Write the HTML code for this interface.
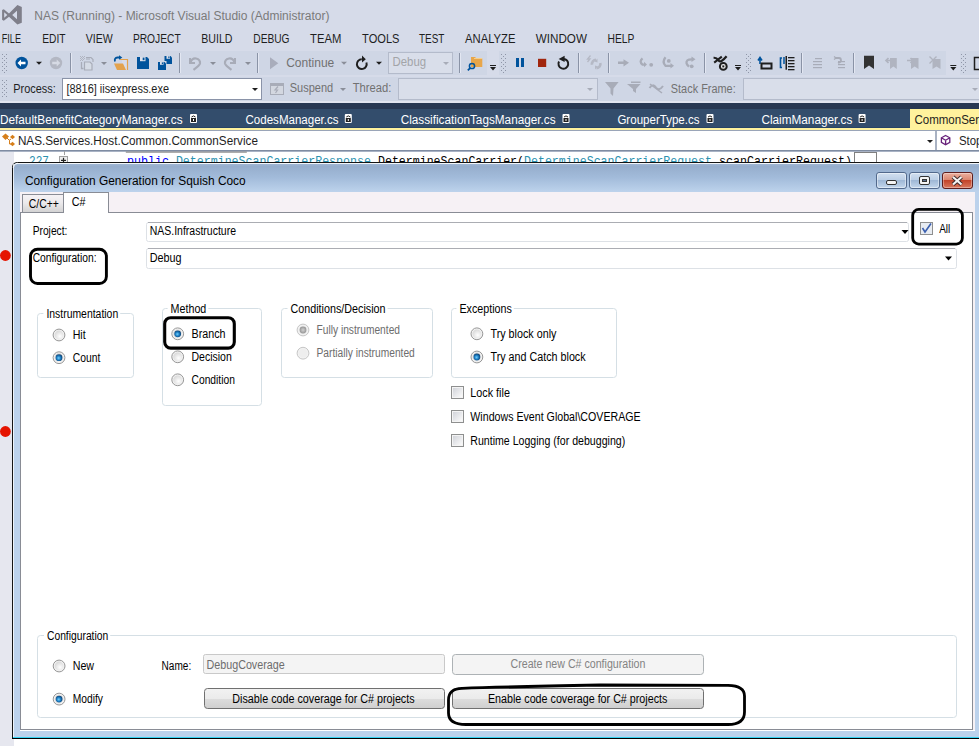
<!DOCTYPE html>
<html><head><meta charset="utf-8"><style>html,body{margin:0;padding:0;background:#fff;overflow:hidden}svg{display:block}</style></head>
<body><svg width="979" height="746" viewBox="0 0 979 746">
<rect x="0" y="0" width="979" height="51" fill="#D6DBE9" />
<path d="M2.1 10 L3.8 9.2 L9 13.4 L17.4 5 L21.8 7 L21.8 22.8 L17.4 24.5 L9 16.8 L3.8 20.8 L2.1 19.8 Z M4.2 12.3 L4.2 17.8 L7.3 15 Z M17 10.8 L12.2 15 L17 19.3 Z" fill="#7F7F8A" fill-rule="evenodd"/>
<text x="34.3" y="19.9" font-family="Liberation Sans" font-size="12.5" fill="#7A7A7A" font-weight="normal" textLength="295.1" lengthAdjust="spacingAndGlyphs" >NAS (Running) - Microsoft Visual Studio (Administrator)</text>
<text x="1.8" y="42.9" font-family="Liberation Sans" font-size="12.5" fill="#1E1E1E" font-weight="normal" textLength="19.2" lengthAdjust="spacingAndGlyphs" >FILE</text>
<text x="42.3" y="42.9" font-family="Liberation Sans" font-size="12.5" fill="#1E1E1E" font-weight="normal" textLength="23.3" lengthAdjust="spacingAndGlyphs" >EDIT</text>
<text x="85.8" y="42.9" font-family="Liberation Sans" font-size="12.5" fill="#1E1E1E" font-weight="normal" textLength="27.0" lengthAdjust="spacingAndGlyphs" >VIEW</text>
<text x="132.9" y="42.9" font-family="Liberation Sans" font-size="12.5" fill="#1E1E1E" font-weight="normal" textLength="47.8" lengthAdjust="spacingAndGlyphs" >PROJECT</text>
<text x="201.2" y="42.9" font-family="Liberation Sans" font-size="12.5" fill="#1E1E1E" font-weight="normal" textLength="31.3" lengthAdjust="spacingAndGlyphs" >BUILD</text>
<text x="253.3" y="42.9" font-family="Liberation Sans" font-size="12.5" fill="#1E1E1E" font-weight="normal" textLength="36.2" lengthAdjust="spacingAndGlyphs" >DEBUG</text>
<text x="310" y="42.9" font-family="Liberation Sans" font-size="12.5" fill="#1E1E1E" font-weight="normal" textLength="31.3" lengthAdjust="spacingAndGlyphs" >TEAM</text>
<text x="362.1" y="42.9" font-family="Liberation Sans" font-size="12.5" fill="#1E1E1E" font-weight="normal" textLength="37.4" lengthAdjust="spacingAndGlyphs" >TOOLS</text>
<text x="419" y="42.9" font-family="Liberation Sans" font-size="12.5" fill="#1E1E1E" font-weight="normal" textLength="25.4" lengthAdjust="spacingAndGlyphs" >TEST</text>
<text x="465" y="42.9" font-family="Liberation Sans" font-size="12.5" fill="#1E1E1E" font-weight="normal" textLength="50.5" lengthAdjust="spacingAndGlyphs" >ANALYZE</text>
<text x="535.8" y="42.9" font-family="Liberation Sans" font-size="12.5" fill="#1E1E1E" font-weight="normal" textLength="51.1" lengthAdjust="spacingAndGlyphs" >WINDOW</text>
<text x="607.5" y="42.9" font-family="Liberation Sans" font-size="12.5" fill="#1E1E1E" font-weight="normal" textLength="26.9" lengthAdjust="spacingAndGlyphs" >HELP</text>
<rect x="0" y="51" width="979" height="52" fill="#D6DBE9" />
<rect x="0" y="51" width="487" height="24" fill="#CFD6E5" />
<rect x="499" y="51" width="447" height="24" fill="#CFD6E5" />
<rect x="960" y="51" width="19" height="24" fill="#CFD6E5" />
<rect x="0" y="77" width="979" height="26" fill="#CFD6E5" />
<rect x="2" y="54" width="1" height="1" fill="#8F96A8" />
<rect x="6" y="54" width="1" height="1" fill="#8F96A8" />
<rect x="4" y="56" width="1" height="1" fill="#8F96A8" />
<rect x="2" y="58" width="1" height="1" fill="#8F96A8" />
<rect x="6" y="58" width="1" height="1" fill="#8F96A8" />
<rect x="4" y="60" width="1" height="1" fill="#8F96A8" />
<rect x="2" y="62" width="1" height="1" fill="#8F96A8" />
<rect x="6" y="62" width="1" height="1" fill="#8F96A8" />
<rect x="4" y="64" width="1" height="1" fill="#8F96A8" />
<rect x="2" y="66" width="1" height="1" fill="#8F96A8" />
<rect x="6" y="66" width="1" height="1" fill="#8F96A8" />
<rect x="4" y="68" width="1" height="1" fill="#8F96A8" />
<rect x="2" y="70" width="1" height="1" fill="#8F96A8" />
<rect x="6" y="70" width="1" height="1" fill="#8F96A8" />
<rect x="4" y="72" width="1" height="1" fill="#8F96A8" />
<circle cx="21.7" cy="63" r="6.2" fill="#00539C"/>
<path d="M17.5 63 L21 59.5 L21 61.8 L25.5 61.8 L25.5 64.2 L21 64.2 L21 66.5 Z" fill="#FFFFFF" />
<path d="M36 61.8 L42 61.8 L39 64.8 Z" fill="#1E1E1E" />
<circle cx="56" cy="63" r="6.2" fill="#B3B7C3"/>
<path d="M60.2 63 L56.7 59.5 L56.7 61.8 L52.2 61.8 L52.2 64.2 L56.7 64.2 L56.7 66.5 Z" fill="#D6DAE4" />
<rect x="70" y="53" width="1" height="20" fill="#8A93A6" />
<rect x="71" y="53" width="1" height="20" fill="#E3E7F2" />
<rect x="80.0" y="56.0" width="1" height="1" fill="#B0B4C0" />
<rect x="82.0" y="56.0" width="1" height="1" fill="#B0B4C0" />
<rect x="84.0" y="56.0" width="1" height="1" fill="#B0B4C0" />
<rect x="81.0" y="57.0" width="1" height="1" fill="#B0B4C0" />
<rect x="83.0" y="57.0" width="1" height="1" fill="#B0B4C0" />
<rect x="80.0" y="58.0" width="1" height="1" fill="#B0B4C0" />
<rect x="82.0" y="58.0" width="1" height="1" fill="#B0B4C0" />
<rect x="84.0" y="58.0" width="1" height="1" fill="#B0B4C0" />
<rect x="81.0" y="59.0" width="1" height="1" fill="#B0B4C0" />
<rect x="83.0" y="59.0" width="1" height="1" fill="#B0B4C0" />
<rect x="80.0" y="60.0" width="1" height="1" fill="#B0B4C0" />
<rect x="82.0" y="60.0" width="1" height="1" fill="#B0B4C0" />
<path d="M86 57.5 L91 57.5 L93 59.5 L93 62" fill="none" stroke="#A8ACB8" stroke-width="1.2" />
<rect x="86" y="58.5" width="4" height="1" fill="#A8ACB8" />
<path d="M84.5 62 L90 62 L92 64 L92 70 L84.5 70 Z" fill="#D6DCE6" stroke="#A8ACB8" stroke-width="1.2" />
<path d="M81.5 62 L81.5 68.5 L83.5 68.5" fill="none" stroke="#A8ACB8" stroke-width="1.3" />
<path d="M101 62.0 L107 62.0 L104 65.0 Z" fill="#8A8E99" />
<rect x="122" y="59" width="6" height="11" fill="#D8DCE8" />
<path d="M120 59.5 L127.5 59.5 L127.5 70" fill="none" stroke="#E3A24C" stroke-width="1.2" />
<path d="M114 63.5 L123 63.5 L126 70 L117 70 Z" fill="#E3A24C" />
<path d="M115 61.5 Q114 58 117.5 57.5 L120 57.5" fill="none" stroke="#00539C" stroke-width="1.8" />
<path d="M119 55.3 L122.3 57.5 L119 59.8 Z" fill="#00539C" />
<path d="M137 57 L147 57 L149 59 L149 69 L137 69 Z" fill="#00539C" />
<rect x="140" y="57" width="5.5" height="4.2" fill="#DCE0EA" />
<rect x="142.7" y="57.6" width="1.8" height="2.6" fill="#00539C" />
<path d="M164.5 56 L170.5 56 L172 57.5 L172 64 L164.5 64 Z" fill="#00539C" />
<rect x="166.5" y="56" width="3.5" height="2.8" fill="#DCE0EA" />
<rect x="168.3" y="56.4" width="1.2" height="1.8" fill="#00539C" />
<rect x="163.5" y="61" width="3" height="4" fill="#CFD6E5" />
<path d="M158 62 L164.5 62 L166 63.5 L166 70 L158 70 Z" fill="#00539C" />
<rect x="160" y="62" width="3.5" height="2.8" fill="#DCE0EA" />
<rect x="161.8" y="62.4" width="1.2" height="1.8" fill="#00539C" />
<rect x="179" y="53" width="1" height="20" fill="#8A93A6" />
<rect x="180" y="53" width="1" height="20" fill="#E3E7F2" />
<path d="M190 58 L190 63 L195 63" fill="none" stroke="#A8ACB8" stroke-width="2" />
<path d="M190.5 62.5 Q192 58 196 58.5 Q200.5 59.5 200 63.5 Q199.5 65.5 193.5 69.8" fill="none" stroke="#A8ACB8" stroke-width="2.2" />
<path d="M210 62.0 L216 62.0 L213 65.0 Z" fill="#8A8E99" />
<path d="M235 58 L235 63 L230 63" fill="none" stroke="#A8ACB8" stroke-width="2" />
<path d="M234.5 62.5 Q233 58 229 58.5 Q224.5 59.5 225 63.5 Q225.5 65.5 231.5 69.8" fill="none" stroke="#A8ACB8" stroke-width="2.2" />
<path d="M245 62.0 L251 62.0 L248 65.0 Z" fill="#8A8E99" />
<rect x="257" y="53" width="1" height="20" fill="#8A93A6" />
<rect x="258" y="53" width="1" height="20" fill="#E3E7F2" />
<path d="M270 57.3 L278.3 63.3 L270 69.3 Z" fill="#A9ADBC" />
<text x="286.2" y="67" font-family="Liberation Sans" font-size="12.5" fill="#717171" font-weight="normal" textLength="48.1" lengthAdjust="spacingAndGlyphs" >Continue</text>
<path d="M341 61.8 L347 61.8 L344 64.8 Z" fill="#8A8E99" />
<path d="M361.8 59.2 A4.9 4.9 0 1 0 366.4 62.5" fill="none" stroke="#1E1E1E" stroke-width="2" />
<path d="M362 55.6 L365.8 59.2 L362 62.6 Z" fill="#1E1E1E" />
<path d="M376 61.8 L382 61.8 L379 64.8 Z" fill="#1E1E1E" />
<rect x="388.5" y="52.5" width="64" height="21" fill="#D9DEEA" stroke="#B4BBCB" stroke-width="1" />
<text x="392.6" y="65.9" font-family="Liberation Sans" font-size="12.5" fill="#A2A4A8" font-weight="normal" textLength="33.5" lengthAdjust="spacingAndGlyphs" >Debug</text>
<path d="M443 62.0 L449 62.0 L446 65.0 Z" fill="#A8ACB8" />
<rect x="459" y="53" width="1" height="20" fill="#8A93A6" />
<rect x="460" y="53" width="1" height="20" fill="#E3E7F2" />
<path d="M471 57 L475 57 L476.5 58.5 L482.3 58.5 L482.3 67 L471 67 Z" fill="#E8A64A" />
<rect x="474" y="58" width="8" height="1" fill="#F6CF8C" />
<circle cx="472" cy="66" r="2.6" fill="none" stroke="#00539C" stroke-width="1.5"/>
<path d="M470.3 67.8 L467.8 70.3" fill="none" stroke="#00539C" stroke-width="1.8" />
<rect x="490" y="65" width="6" height="1" fill="#1E1E1E" />
<path d="M490 67 L496 67 L493 70.5 Z" fill="#1E1E1E" />
<rect x="501" y="54" width="1" height="1" fill="#8F96A8" />
<rect x="505" y="54" width="1" height="1" fill="#8F96A8" />
<rect x="503" y="56" width="1" height="1" fill="#8F96A8" />
<rect x="501" y="58" width="1" height="1" fill="#8F96A8" />
<rect x="505" y="58" width="1" height="1" fill="#8F96A8" />
<rect x="503" y="60" width="1" height="1" fill="#8F96A8" />
<rect x="501" y="62" width="1" height="1" fill="#8F96A8" />
<rect x="505" y="62" width="1" height="1" fill="#8F96A8" />
<rect x="503" y="64" width="1" height="1" fill="#8F96A8" />
<rect x="501" y="66" width="1" height="1" fill="#8F96A8" />
<rect x="505" y="66" width="1" height="1" fill="#8F96A8" />
<rect x="503" y="68" width="1" height="1" fill="#8F96A8" />
<rect x="501" y="70" width="1" height="1" fill="#8F96A8" />
<rect x="505" y="70" width="1" height="1" fill="#8F96A8" />
<rect x="503" y="72" width="1" height="1" fill="#8F96A8" />
<rect x="516" y="58" width="3" height="9" fill="#00539C" />
<rect x="521" y="58" width="3" height="9" fill="#00539C" />
<rect x="538" y="58.8" width="8.2" height="8.2" fill="#A1260D" />
<path d="M559 61.5 A4.9 4.9 0 1 0 563.5 58.9" fill="none" stroke="#1E1E1E" stroke-width="2" />
<path d="M558.6 58.9 L564.6 55.7 L564.6 62 Z" fill="#1E1E1E" />
<rect x="578" y="53" width="1" height="20" fill="#8A93A6" />
<rect x="579" y="53" width="1" height="20" fill="#E3E7F2" />
<path d="M596 59.8 A4.3 4.3 0 0 0 592 64.8" fill="none" stroke="#B5B9C5" stroke-width="2.6" />
<path d="M596.5 68.3 A4.3 4.3 0 0 0 600.3 63" fill="none" stroke="#B5B9C5" stroke-width="2.6" />
<path d="M594.5 61.5 L597.5 58.5 L597.5 62.5 Z" fill="#B5B9C5" />
<path d="M598 66.5 L595 69.5 L595 65.5 Z" fill="#B5B9C5" />
<path d="M590.5 55.5 L587.5 59 L590 59 L587.5 62" fill="none" stroke="#B5B9C5" stroke-width="1.3" />
<rect x="608" y="53" width="1" height="20" fill="#8A93A6" />
<rect x="609" y="53" width="1" height="20" fill="#E3E7F2" />
<path d="M618 61.5 L623.5 61.5 L623.5 59.2 L629 62.7 L623.5 66.4 L623.5 64 L618 64 Z" fill="#A8ACB8" />
<path d="M642.5 58.3 Q638.8 61.5 642.5 64.6 L644.5 64.6" fill="none" stroke="#A8ACB8" stroke-width="2.3" />
<path d="M644 61.8 L647 64.6 L644 67.3 Z" fill="#A8ACB8" />
<circle cx="651.2" cy="64.8" r="1.9" fill="#A8ACB8"/>
<path d="M665.5 57.3 Q661.8 62 665.5 65.8 L671 65.8" fill="none" stroke="#A8ACB8" stroke-width="2.3" />
<path d="M670.5 63 L674 65.8 L670.5 68.6 Z" fill="#A8ACB8" />
<circle cx="668.8" cy="60.9" r="1.9" fill="#A8ACB8"/>
<path d="M689 66.5 Q684.8 63 687.5 60.3 Q688.5 59.3 692 59.3" fill="none" stroke="#A8ACB8" stroke-width="2.3" />
<path d="M691.5 56.5 L695.5 59.3 L691.5 62.1 Z" fill="#A8ACB8" />
<circle cx="691.7" cy="66.3" r="1.9" fill="#A8ACB8"/>
<rect x="704" y="53" width="1" height="20" fill="#8A93A6" />
<rect x="705" y="53" width="1" height="20" fill="#E3E7F2" />
<path d="M713.6 57.8 Q716.5 57.5 718.5 60.5 Q720.5 63.5 726.6 56.3" fill="none" stroke="#1E1E1E" stroke-width="2.2" />
<path d="M714.2 62.6 L721.8 56.6" fill="none" stroke="#1E1E1E" stroke-width="2" />
<circle cx="723.3" cy="66.4" r="3.4" fill="#F0F0F0" stroke="#1E1E1E" stroke-width="2"/>
<rect x="722.3" y="65.4" width="2" height="2" fill="#1E1E1E" />
<rect x="735" y="65" width="6" height="1" fill="#1E1E1E" />
<path d="M735 67 L741 67 L738 70.5 Z" fill="#1E1E1E" />
<rect x="746" y="54" width="1" height="1" fill="#8F96A8" />
<rect x="750" y="54" width="1" height="1" fill="#8F96A8" />
<rect x="748" y="56" width="1" height="1" fill="#8F96A8" />
<rect x="746" y="58" width="1" height="1" fill="#8F96A8" />
<rect x="750" y="58" width="1" height="1" fill="#8F96A8" />
<rect x="748" y="60" width="1" height="1" fill="#8F96A8" />
<rect x="746" y="62" width="1" height="1" fill="#8F96A8" />
<rect x="750" y="62" width="1" height="1" fill="#8F96A8" />
<rect x="748" y="64" width="1" height="1" fill="#8F96A8" />
<rect x="746" y="66" width="1" height="1" fill="#8F96A8" />
<rect x="750" y="66" width="1" height="1" fill="#8F96A8" />
<rect x="748" y="68" width="1" height="1" fill="#8F96A8" />
<rect x="746" y="70" width="1" height="1" fill="#8F96A8" />
<rect x="750" y="70" width="1" height="1" fill="#8F96A8" />
<rect x="748" y="72" width="1" height="1" fill="#8F96A8" />
<path d="M760 58 L760 64 M758 60.5 L760 57.5 L762 60.5" fill="none" stroke="#00539C" stroke-width="1.6" />
<rect x="761.5" y="63.5" width="10" height="5" fill="none" stroke="#1E1E1E" stroke-width="2" />
<path d="M782 58 L780.5 58 L780.5 67.5 L782 67.5" fill="none" stroke="#00539C" stroke-width="1.6" />
<path d="M784 57 L784 64" fill="none" stroke="#00539C" stroke-width="1.5" />
<rect x="785.5" y="56" width="1.5" height="13.7" fill="#1E1E1E" />
<rect x="788" y="57" width="6.5" height="1.3" fill="#1E1E1E" />
<rect x="788" y="60" width="6.5" height="1.3" fill="#1E1E1E" />
<rect x="788" y="63" width="6.5" height="1.3" fill="#1E1E1E" />
<rect x="788" y="66" width="6.5" height="1.3" fill="#1E1E1E" />
<rect x="788" y="69" width="6.5" height="1.3" fill="#1E1E1E" />
<rect x="801" y="53" width="1" height="20" fill="#8A93A6" />
<rect x="802" y="53" width="1" height="20" fill="#E3E7F2" />
<rect x="815" y="58" width="7" height="1.2" fill="#A8ACB8" />
<rect x="813" y="61" width="9" height="1.2" fill="#A8ACB8" />
<rect x="813" y="64" width="9" height="1.2" fill="#A8ACB8" />
<rect x="813" y="67" width="9" height="1.2" fill="#A8ACB8" />
<path d="M835 58 L839 58 Q841 58 841 60.5 Q841 62 838 63" fill="none" stroke="#A8ACB8" stroke-width="1.8" />
<path d="M834 56.5 L836 58 L834 59.5" fill="none" stroke="#A8ACB8" stroke-width="1.3" />
<rect x="838" y="61" width="7" height="1.2" fill="#A8ACB8" />
<rect x="838" y="64" width="7" height="1.2" fill="#A8ACB8" />
<rect x="838" y="67" width="7" height="1.2" fill="#A8ACB8" />
<rect x="853" y="53" width="1" height="20" fill="#8A93A6" />
<rect x="854" y="53" width="1" height="20" fill="#E3E7F2" />
<path d="M864 55.7 L874 55.7 L874 69 L869 65.5 L864 69 Z" fill="#333333" />
<path d="M890 58 L896.8 58 L896.8 69 L893.4 66.5 L890 69 Z" fill="#B0B4C0" />
<path d="M891.5 60.5 L886 60.5 M888.5 58 L886 60.5 L888.5 63" fill="none" stroke="#B0B4C0" stroke-width="1.7" />
<path d="M911 58 L918.5 58 L918.5 69 L914.7 66.5 L911 69 Z" fill="#B0B4C0" />
<path d="M907 60.5 L913 60.5 M910.5 58 L913 60.5 L910.5 63" fill="none" stroke="#B0B4C0" stroke-width="1.7" />
<path d="M932.5 59 L940.5 59 L940.5 69 L936.5 66.5 L932.5 69 Z" fill="#B0B4C0" />
<path d="M929.5 56.5 L936.5 63.5 M936.5 56.5 L929.5 63.5" fill="none" stroke="#B0B4C0" stroke-width="1.4" />
<rect x="950.3" y="65" width="6" height="1" fill="#1E1E1E" />
<path d="M950.3 67 L956.3 67 L953.3 70.5 Z" fill="#1E1E1E" />
<rect x="961" y="54" width="1" height="1" fill="#8F96A8" />
<rect x="965" y="54" width="1" height="1" fill="#8F96A8" />
<rect x="963" y="56" width="1" height="1" fill="#8F96A8" />
<rect x="961" y="58" width="1" height="1" fill="#8F96A8" />
<rect x="965" y="58" width="1" height="1" fill="#8F96A8" />
<rect x="963" y="60" width="1" height="1" fill="#8F96A8" />
<rect x="961" y="62" width="1" height="1" fill="#8F96A8" />
<rect x="965" y="62" width="1" height="1" fill="#8F96A8" />
<rect x="963" y="64" width="1" height="1" fill="#8F96A8" />
<rect x="961" y="66" width="1" height="1" fill="#8F96A8" />
<rect x="965" y="66" width="1" height="1" fill="#8F96A8" />
<rect x="963" y="68" width="1" height="1" fill="#8F96A8" />
<rect x="961" y="70" width="1" height="1" fill="#8F96A8" />
<rect x="965" y="70" width="1" height="1" fill="#8F96A8" />
<rect x="963" y="72" width="1" height="1" fill="#8F96A8" />
<rect x="974.5" y="57.5" width="8" height="12" fill="none" stroke="#1E1E1E" stroke-width="1.5" />
<rect x="2" y="80" width="1" height="1" fill="#8F96A8" />
<rect x="6" y="80" width="1" height="1" fill="#8F96A8" />
<rect x="4" y="82" width="1" height="1" fill="#8F96A8" />
<rect x="2" y="84" width="1" height="1" fill="#8F96A8" />
<rect x="6" y="84" width="1" height="1" fill="#8F96A8" />
<rect x="4" y="86" width="1" height="1" fill="#8F96A8" />
<rect x="2" y="88" width="1" height="1" fill="#8F96A8" />
<rect x="6" y="88" width="1" height="1" fill="#8F96A8" />
<rect x="4" y="90" width="1" height="1" fill="#8F96A8" />
<rect x="2" y="92" width="1" height="1" fill="#8F96A8" />
<rect x="6" y="92" width="1" height="1" fill="#8F96A8" />
<rect x="4" y="94" width="1" height="1" fill="#8F96A8" />
<rect x="2" y="96" width="1" height="1" fill="#8F96A8" />
<rect x="6" y="96" width="1" height="1" fill="#8F96A8" />
<text x="13.3" y="92.9" font-family="Liberation Sans" font-size="12.5" fill="#1E1E1E" font-weight="normal" textLength="42.4" lengthAdjust="spacingAndGlyphs" >Process:</text>
<rect x="62.5" y="78.5" width="199" height="21" fill="#FFFFFF" stroke="#8A93A8" stroke-width="1" />
<text x="66.4" y="92.9" font-family="Liberation Sans" font-size="12.5" fill="#1E1E1E" font-weight="normal" textLength="102.6" lengthAdjust="spacingAndGlyphs" >[8816] iisexpress.exe</text>
<path d="M252 88.0 L258 88.0 L255 91.0 Z" fill="#1E1E1E" />
<rect x="270.5" y="83.5" width="13" height="11" fill="#D3D7E0" stroke="#A8ACB8" stroke-width="1" />
<rect x="271" y="84" width="12" height="2" fill="#A8ACB8" />
<path d="M278 86.5 L275 90 L277.5 90 L275.5 93" fill="none" stroke="#A8ACB8" stroke-width="1.2" />
<text x="289.7" y="92.4" font-family="Liberation Sans" font-size="12.5" fill="#717171" font-weight="normal" textLength="43.5" lengthAdjust="spacingAndGlyphs" >Suspend</text>
<path d="M340 88.0 L346 88.0 L343 91.0 Z" fill="#8A8E99" />
<text x="352.7" y="92.4" font-family="Liberation Sans" font-size="12.5" fill="#717171" font-weight="normal" textLength="38.6" lengthAdjust="spacingAndGlyphs" >Thread:</text>
<rect x="398.5" y="78.5" width="199" height="21" fill="#D9DEEA" stroke="#B4BBCB" stroke-width="1" />
<path d="M587 88.0 L593 88.0 L590 91.0 Z" fill="#A8ACB8" />
<path d="M605 82 L618.6 82 L613.5 88.5 L613 96 L610.5 93.5 L610.5 88.5 Z" fill="#A8ACB8" />
<path d="M627 84 L640.5 84 L636 89 L636 93 L633 91 L633 89 Z" fill="#A8ACB8" />
<rect x="631" y="81.5" width="9.5" height="1.5" fill="#A8ACB8" />
<path d="M649.5 88 Q653 83 656 87.5 Q659 91.5 663 86" fill="none" stroke="#A8ACB8" stroke-width="2" />
<path d="M650 84 L662 93" fill="none" stroke="#A8ACB8" stroke-width="1.5" />
<text x="670.8" y="92.5" font-family="Liberation Sans" font-size="12.5" fill="#717171" font-weight="normal" textLength="64.9" lengthAdjust="spacingAndGlyphs" >Stack Frame:</text>
<rect x="743.5" y="78.5" width="240" height="21" fill="#D9DEEA" stroke="#B4BBCB" stroke-width="1" />
<path d="M972 88.0 L978 88.0 L975 91.0 Z" fill="#A8ACB8" />
<rect x="0" y="101" width="979" height="2" fill="#E2E5F0" />
<rect x="0" y="103" width="979" height="28" fill="#334D6C" />
<rect x="0" y="103" width="979" height="6" fill="#283853" />
<rect x="0" y="127" width="979" height="1" fill="#274366" />
<rect x="910" y="109" width="69" height="21" fill="#FFF29D" />
<rect x="0" y="128" width="979" height="2" fill="#FFF29D" />
<rect x="0" y="130" width="979" height="1" fill="#9AA5B8" />
<text x="0" y="123.6" font-family="Liberation Sans" font-size="12.5" fill="#FFFFFF" font-weight="normal" textLength="182.6" lengthAdjust="spacingAndGlyphs" >DefaultBenefitCategoryManager.cs</text>
<text x="245.5" y="123.6" font-family="Liberation Sans" font-size="12.5" fill="#FFFFFF" font-weight="normal" textLength="93.1" lengthAdjust="spacingAndGlyphs" >CodesManager.cs</text>
<text x="400.7" y="123.6" font-family="Liberation Sans" font-size="12.5" fill="#FFFFFF" font-weight="normal" textLength="154.9" lengthAdjust="spacingAndGlyphs" >ClassificationTagsManager.cs</text>
<text x="617.4" y="123.6" font-family="Liberation Sans" font-size="12.5" fill="#FFFFFF" font-weight="normal" textLength="82.1" lengthAdjust="spacingAndGlyphs" >GrouperType.cs</text>
<text x="761.4" y="123.6" font-family="Liberation Sans" font-size="12.5" fill="#FFFFFF" font-weight="normal" textLength="91.0" lengthAdjust="spacingAndGlyphs" >ClaimManager.cs</text>
<text x="914.4" y="123.6" font-family="Liberation Sans" font-size="12.5" fill="#1E1E1E" font-weight="normal" textLength="100" lengthAdjust="spacingAndGlyphs" >CommonService.cs</text>
<rect x="190" y="114" width="7" height="9" fill="#FFFFFF" rx="1" />
<path d="M191.5 117 Q193.5 114.8 195.5 117" fill="none" stroke="#222" stroke-width="1" />
<rect x="191" y="118" width="5" height="4" fill="#222" />
<rect x="193" y="119" width="1" height="2" fill="#FFFFFF" />
<rect x="344.8" y="114" width="7" height="9" fill="#FFFFFF" rx="1" />
<path d="M346.3 117 Q348.3 114.8 350.3 117" fill="none" stroke="#222" stroke-width="1" />
<rect x="345.8" y="118" width="5" height="4" fill="#222" />
<rect x="347.8" y="119" width="1" height="2" fill="#FFFFFF" />
<rect x="562.5" y="114" width="7" height="9" fill="#FFFFFF" rx="1" />
<path d="M564.0 117 Q566.0 114.8 568.0 117" fill="none" stroke="#222" stroke-width="1" />
<rect x="563.5" y="118" width="5" height="4" fill="#222" />
<rect x="565.5" y="119" width="1" height="2" fill="#FFFFFF" />
<rect x="706.5" y="114" width="7" height="9" fill="#FFFFFF" rx="1" />
<path d="M708.0 117 Q710.0 114.8 712.0 117" fill="none" stroke="#222" stroke-width="1" />
<rect x="707.5" y="118" width="5" height="4" fill="#222" />
<rect x="709.5" y="119" width="1" height="2" fill="#FFFFFF" />
<rect x="858.6" y="114" width="7" height="9" fill="#FFFFFF" rx="1" />
<path d="M860.1 117 Q862.1 114.8 864.1 117" fill="none" stroke="#222" stroke-width="1" />
<rect x="859.6" y="118" width="5" height="4" fill="#222" />
<rect x="861.6" y="119" width="1" height="2" fill="#FFFFFF" />
<rect x="0" y="131" width="979" height="19" fill="#FFFFFF" />
<rect x="0" y="150" width="979" height="1" fill="#7F8CA2" />
<rect x="935" y="131" width="2" height="19" fill="#A9B2C3" />
<path d="M2 136.5 L5.5 133.5 L9 136.5 L5.5 140 Z" fill="#D67F1B" />
<path d="M10 137 L12.5 134.8 L15 137 L12.5 139.3 Z" fill="#D67F1B" />
<path d="M10 144 L12.5 141.8 L15 144 L12.5 146.3 Z" fill="#D67F1B" />
<path d="M6 137 L9.5 140.5 L9.5 144 L11 144 M9 140.5 L11 139" fill="none" stroke="#D67F1B" stroke-width="1" />
<path d="M927 140.0 L933 140.0 L930 143.0 Z" fill="#1E1E1E" />
<path d="M945.6 135.5 L949.8 137.8 L949.8 142.4 L945.6 144.7 L941.4 142.4 L941.4 137.8 Z M941.4 137.8 L945.6 140.2 L949.8 137.8 M945.6 140.2 L945.6 144.7" fill="none" stroke="#68217A" stroke-width="1.3" />
<text x="17.9" y="145.1" font-family="Liberation Sans" font-size="12.5" fill="#1E1E1E" font-weight="normal" textLength="240" lengthAdjust="spacingAndGlyphs" >NAS.Services.Host.Common.CommonService</text>
<text x="958.9" y="144.9" font-family="Liberation Sans" font-size="12.5" fill="#1E1E1E" font-weight="normal" textLength="23.5" lengthAdjust="spacingAndGlyphs" >Stop</text>
<rect x="0" y="151" width="979" height="595" fill="#FFFFFF" />
<rect x="0" y="151" width="14" height="595" fill="#E6E7EF" />
<rect x="0" y="151" width="979" height="1" fill="#A8B2C4" />
<text x="29" y="165" font-family="Liberation Mono" font-size="13" fill="#2B91AF" font-weight="normal" textLength="20" lengthAdjust="spacingAndGlyphs" >227</text>
<text x="126.9" y="165" font-family="Liberation Mono" font-size="13" fill="#0000FF" font-weight="normal" textLength="42" lengthAdjust="spacingAndGlyphs" >public</text>
<text x="175.9" y="165" font-family="Liberation Mono" font-size="13" fill="#2B91AF" font-weight="normal" textLength="195" lengthAdjust="spacingAndGlyphs" >DetermineScanCarrierResponse</text>
<text x="378" y="165" font-family="Liberation Mono" font-size="13" fill="#000000" font-weight="normal" textLength="146" lengthAdjust="spacingAndGlyphs" >DetermineScanCarrier(</text>
<text x="524" y="165" font-family="Liberation Mono" font-size="13" fill="#2B91AF" font-weight="normal" textLength="188" lengthAdjust="spacingAndGlyphs" >DetermineScanCarrierRequest</text>
<text x="719" y="165" font-family="Liberation Mono" font-size="13" fill="#000000" font-weight="normal" textLength="133" lengthAdjust="spacingAndGlyphs" >scanCarrierRequest)</text>
<rect x="854.5" y="152.5" width="22" height="10" fill="none" stroke="#808080" stroke-width="1" />
<rect x="59.5" y="156.5" width="8" height="8" fill="#EEEEEE" stroke="#A0A0A0" stroke-width="1" />
<rect x="61" y="159.8" width="5" height="1.2" fill="#222" />
<rect x="62.9" y="157.8" width="1.2" height="5" fill="#222" />
<rect x="64" y="151" width="1" height="4" fill="#A0A0A0" />
<rect x="125.8" y="151.5" width="121" height="1.2" fill="#8A8A8A" />
<circle cx="5.4" cy="255.5" r="5.4" fill="#E51400"/>
<circle cx="5.4" cy="431.5" r="5.4" fill="#E51400"/>
<defs><linearGradient id="tb" gradientUnits="userSpaceOnUse" x1="0" y1="163" x2="0" y2="192"><stop offset="0" stop-color="#A3BAD7"/><stop offset="0.12" stop-color="#96AECD"/><stop offset="0.5" stop-color="#A2BBDA"/><stop offset="1" stop-color="#BDD3EC"/></linearGradient></defs>
<path d="M12.5 739 L12.5 167.5 Q12.5 162.5 17.5 162.5 L990 162.5 L990 739 Z" fill="url(#tb)" stroke="#151515" stroke-width="1" />
<rect x="16" y="163" width="963" height="1" fill="rgba(255,255,255,0.85)" />
<path d="M13.5 167.5 Q13.5 163.5 17.5 163.5" fill="none" stroke="rgba(255,255,255,0.85)" stroke-width="1" />
<rect x="13" y="192" width="7" height="546" fill="#BCD2EC" />
<rect x="975" y="192" width="4" height="546" fill="#BCD2EC" />
<rect x="13" y="730" width="966" height="7" fill="#BCD2EC" />
<rect x="13" y="164" width="1" height="573" fill="rgba(255,255,255,0.75)" />
<rect x="20" y="730" width="955" height="1" fill="#FFFFFF" />
<rect x="13" y="737" width="966" height="1" fill="#35D3F2" />
<rect x="12" y="738" width="967" height="1" fill="#000" />
<rect x="12" y="739" width="2" height="8" fill="#E6E7EF" />
<rect x="14" y="739" width="965" height="8" fill="#FFFFFF" />
<rect x="20" y="192" width="955" height="538" fill="#F6F1F5" />
<text x="24.9" y="184.6" font-family="Liberation Sans" font-size="12.5" fill="#000" font-weight="normal" textLength="220.8" lengthAdjust="spacingAndGlyphs" >Configuration Generation for Squish Coco</text>
<defs><linearGradient id="bb" x1="0" y1="0" x2="0" y2="1"><stop offset="0" stop-color="#D3E0F0"/><stop offset="0.45" stop-color="#BCCFE6"/><stop offset="0.5" stop-color="#9FB8D6"/><stop offset="1" stop-color="#C6D9EE"/></linearGradient><linearGradient id="bc" x1="0" y1="0" x2="0" y2="1"><stop offset="0" stop-color="#EDB3A3"/><stop offset="0.45" stop-color="#DC8770"/><stop offset="0.5" stop-color="#C3442A"/><stop offset="1" stop-color="#DA7B61"/></linearGradient></defs>
<rect x="876.5" y="172.5" width="30" height="16" fill="url(#bb)" stroke="#52698C" stroke-width="1" rx="2.5" />
<rect x="909.5" y="172.5" width="30" height="16" fill="url(#bb)" stroke="#52698C" stroke-width="1" rx="2.5" />
<rect x="942.5" y="172.5" width="30" height="16" fill="url(#bc)" stroke="#5E1E1E" stroke-width="1" rx="2.5" />
<rect x="877.5" y="173.5" width="28" height="14" fill="none" stroke="rgba(255,255,255,0.45)" stroke-width="1" rx="2" />
<rect x="910.5" y="173.5" width="28" height="14" fill="none" stroke="rgba(255,255,255,0.45)" stroke-width="1" rx="2" />
<rect x="943.5" y="173.5" width="28" height="14" fill="none" stroke="rgba(255,255,255,0.35)" stroke-width="1" rx="2" />
<rect x="886.5" y="180.5" width="10" height="4" fill="#F4F4F4" stroke="#333" stroke-width="1" rx="1.5" />
<rect x="919.5" y="176.5" width="10" height="8" fill="#F4F4F4" stroke="#333" stroke-width="1" rx="1.5" />
<rect x="922.5" y="179.5" width="4" height="2" fill="#5A6F8E" stroke="#333" stroke-width="1" />
<path d="M953 177 L961.5 184.5 M961.5 177 L953 184.5" fill="none" stroke="#3A2A2A" stroke-width="4" />
<path d="M953 177 L961.5 184.5 M961.5 177 L953 184.5" fill="none" stroke="#F4F4F4" stroke-width="2.2" />
<rect x="20.5" y="212.5" width="952" height="517" fill="#FFFFFF" stroke="#898C95" stroke-width="1" />
<defs><linearGradient id="tg" x1="0" y1="0" x2="0" y2="1"><stop offset="0" stop-color="#F6F3F6"/><stop offset="0.45" stop-color="#ECEAEC"/><stop offset="1" stop-color="#D2D2D2"/></linearGradient></defs>
<rect x="22.5" y="194.5" width="41" height="18" fill="url(#tg)" stroke="#898C95" stroke-width="1" />
<rect x="63.5" y="192.5" width="45" height="20" fill="#FFFFFF" stroke="#898C95" stroke-width="1" />
<rect x="64" y="212" width="44" height="1.5" fill="#FFFFFF" />
<text x="28.8" y="207.5" font-family="Liberation Sans" font-size="12" fill="#000" font-weight="normal" textLength="30.1" lengthAdjust="spacingAndGlyphs" >C/C++</text>
<text x="71.7" y="205.9" font-family="Liberation Sans" font-size="12" fill="#000" font-weight="normal" textLength="13.8" lengthAdjust="spacingAndGlyphs" >C#</text>
<text x="32.7" y="234.9" font-family="Liberation Sans" font-size="12" fill="#000" font-weight="normal" textLength="34.7" lengthAdjust="spacingAndGlyphs" >Project:</text>
<rect x="146.5" y="222.5" width="762" height="19" fill="#FFFFFF" stroke="#DDE1E6" stroke-width="1" rx="2" />
<rect x="148" y="222" width="759" height="1" fill="#ABADB3" />
<text x="149.7" y="235" font-family="Liberation Sans" font-size="12" fill="#000" font-weight="normal" textLength="86.3" lengthAdjust="spacingAndGlyphs" >NAS.Infrastructure</text>
<path d="M901.5 230 L908.5 230 L905 234 Z" fill="#000" />
<text x="32.7" y="261.8" font-family="Liberation Sans" font-size="12" fill="#000" font-weight="normal" textLength="63.8" lengthAdjust="spacingAndGlyphs" >Configuration:</text>
<rect x="146.5" y="248.5" width="810" height="20" fill="#FFFFFF" stroke="#DDE1E6" stroke-width="1" rx="2" />
<rect x="148" y="248" width="807" height="1" fill="#ABADB3" />
<text x="149.7" y="261.8" font-family="Liberation Sans" font-size="12" fill="#000" font-weight="normal" textLength="31.8" lengthAdjust="spacingAndGlyphs" >Debug</text>
<path d="M945 256.5 L952 256.5 L948.5 260.5 Z" fill="#000" />
<rect x="920.5" y="222.5" width="12" height="12" fill="#E8ECF2" stroke="#8E8F8F" stroke-width="1" />
<path d="M922.5 228 L925 232 L931 223.5" fill="none" stroke="#3A5FAF" stroke-width="1.6" />
<text x="939.2" y="232.9" font-family="Liberation Sans" font-size="12" fill="#000" font-weight="normal" textLength="11.1" lengthAdjust="spacingAndGlyphs" >All</text>
<defs><radialGradient id="rg" cx="0.6" cy="0.65" r="0.8"><stop offset="0" stop-color="#FFFFFF"/><stop offset="1" stop-color="#D0D0D0"/></radialGradient><radialGradient id="rd" cx="0.5" cy="0.5" r="0.6"><stop offset="0" stop-color="#D0D0D0"/><stop offset="1" stop-color="#8A8A8A"/></radialGradient><radialGradient id="rs" cx="0.45" cy="0.55" r="0.6"><stop offset="0" stop-color="#6FD0FF"/><stop offset="0.5" stop-color="#1C7BC0"/><stop offset="1" stop-color="#0A3562"/></radialGradient><linearGradient id="cg" x1="0" y1="0" x2="1" y2="1"><stop offset="0" stop-color="#D2D4DA"/><stop offset="1" stop-color="#FAFAFA"/></linearGradient></defs>
<path d="M43.4 313.5 L40.5 313.5 Q37.5 313.5 37.5 316.5 L37.5 374.5 Q37.5 377.5 40.5 377.5 L130.5 377.5 Q133.5 377.5 133.5 374.5 L133.5 316.5 Q133.5 313.5 130.5 313.5 L120.2 313.5" fill="none" stroke="#D5DFE5" stroke-width="1" />
<text x="46.4" y="317.8" font-family="Liberation Sans" font-size="12" fill="#000" font-weight="normal" textLength="71.8" lengthAdjust="spacingAndGlyphs" >Instrumentation</text>
<circle cx="59" cy="335" r="5.9" fill="#F2F2F2" stroke="#979797" stroke-width="1"/>
<circle cx="59" cy="335" r="4.4" fill="url(#rg)"/>
<text x="72.7" y="338.7" font-family="Liberation Sans" font-size="12" fill="#000" font-weight="normal" textLength="13" lengthAdjust="spacingAndGlyphs" >Hit</text>
<circle cx="59" cy="357.7" r="5.9" fill="#F2F2F2" stroke="#979797" stroke-width="1"/>
<circle cx="59" cy="357.7" r="4.4" fill="url(#rg)"/>
<circle cx="59" cy="357.7" r="3.4" fill="url(#rs)"/>
<text x="72.7" y="361.5" font-family="Liberation Sans" font-size="12" fill="#000" font-weight="normal" textLength="27.6" lengthAdjust="spacingAndGlyphs" >Count</text>
<path d="M167.6 308.5 L165.5 308.5 Q162.5 308.5 162.5 311.5 L162.5 402.5 Q162.5 405.5 165.5 405.5 L258.5 405.5 Q261.5 405.5 261.5 402.5 L261.5 311.5 Q261.5 308.5 258.5 308.5 L208.3 308.5" fill="none" stroke="#D5DFE5" stroke-width="1" />
<text x="170.6" y="312.9" font-family="Liberation Sans" font-size="12" fill="#000" font-weight="normal" textLength="35.7" lengthAdjust="spacingAndGlyphs" >Method</text>
<circle cx="177.7" cy="333.8" r="5.9" fill="#F2F2F2" stroke="#979797" stroke-width="1"/>
<circle cx="177.7" cy="333.8" r="4.4" fill="url(#rg)"/>
<circle cx="177.7" cy="333.8" r="3.4" fill="url(#rs)"/>
<text x="191.5" y="337.6" font-family="Liberation Sans" font-size="12" fill="#000" font-weight="normal" textLength="34" lengthAdjust="spacingAndGlyphs" >Branch</text>
<circle cx="177.7" cy="356.8" r="5.9" fill="#F2F2F2" stroke="#979797" stroke-width="1"/>
<circle cx="177.7" cy="356.8" r="4.4" fill="url(#rg)"/>
<text x="191.5" y="360.6" font-family="Liberation Sans" font-size="12" fill="#000" font-weight="normal" textLength="40.3" lengthAdjust="spacingAndGlyphs" >Decision</text>
<circle cx="177.7" cy="379.8" r="5.9" fill="#F2F2F2" stroke="#979797" stroke-width="1"/>
<circle cx="177.7" cy="379.8" r="4.4" fill="url(#rg)"/>
<text x="191.5" y="383.6" font-family="Liberation Sans" font-size="12" fill="#000" font-weight="normal" textLength="43.4" lengthAdjust="spacingAndGlyphs" >Condition</text>
<path d="M287.5 308.5 L284.5 308.5 Q281.5 308.5 281.5 311.5 L281.5 374.5 Q281.5 377.5 284.5 377.5 L429.5 377.5 Q432.5 377.5 432.5 374.5 L432.5 311.5 Q432.5 308.5 429.5 308.5 L387.6 308.5" fill="none" stroke="#D5DFE5" stroke-width="1" />
<text x="290.5" y="313.2" font-family="Liberation Sans" font-size="12" fill="#000" font-weight="normal" textLength="95.1" lengthAdjust="spacingAndGlyphs" >Conditions/Decision</text>
<circle cx="303" cy="330" r="5.9" fill="#F2F2F2" stroke="#C6C6C6" stroke-width="1"/>
<circle cx="303" cy="330" r="4.4" fill="#EEEEEE"/>
<circle cx="303" cy="330" r="3.4" fill="url(#rd)"/>
<text x="316.5" y="333.8" font-family="Liberation Sans" font-size="12" fill="#6D6D6D" font-weight="normal" textLength="83.5" lengthAdjust="spacingAndGlyphs" >Fully instrumented</text>
<circle cx="303" cy="353.2" r="5.9" fill="#F2F2F2" stroke="#C6C6C6" stroke-width="1"/>
<circle cx="303" cy="353.2" r="4.4" fill="#EEEEEE"/>
<text x="316.5" y="357" font-family="Liberation Sans" font-size="12" fill="#6D6D6D" font-weight="normal" textLength="98.3" lengthAdjust="spacingAndGlyphs" >Partially instrumented</text>
<path d="M456.4 308.5 L454.5 308.5 Q451.5 308.5 451.5 311.5 L451.5 374.5 Q451.5 377.5 454.5 377.5 L613.5 377.5 Q616.5 377.5 616.5 374.5 L616.5 311.5 Q616.5 308.5 613.5 308.5 L513.8 308.5" fill="none" stroke="#D5DFE5" stroke-width="1" />
<text x="459.4" y="313.2" font-family="Liberation Sans" font-size="12" fill="#000" font-weight="normal" textLength="52.4" lengthAdjust="spacingAndGlyphs" >Exceptions</text>
<circle cx="476.9" cy="333.8" r="5.9" fill="#F2F2F2" stroke="#979797" stroke-width="1"/>
<circle cx="476.9" cy="333.8" r="4.4" fill="url(#rg)"/>
<text x="490.5" y="337.6" font-family="Liberation Sans" font-size="12" fill="#000" font-weight="normal" textLength="65.9" lengthAdjust="spacingAndGlyphs" >Try block only</text>
<circle cx="476.9" cy="357" r="5.9" fill="#F2F2F2" stroke="#979797" stroke-width="1"/>
<circle cx="476.9" cy="357" r="4.4" fill="url(#rg)"/>
<circle cx="476.9" cy="357" r="3.4" fill="url(#rs)"/>
<text x="490.5" y="360.7" font-family="Liberation Sans" font-size="12" fill="#000" font-weight="normal" textLength="95.1" lengthAdjust="spacingAndGlyphs" >Try and Catch block</text>
<rect x="451.5" y="386.5" width="12" height="12" fill="#F4F4F4" stroke="#8E8F8F" stroke-width="1" />
<rect x="453" y="388" width="9" height="9" fill="url(#cg)" />
<text x="470.3" y="396.6" font-family="Liberation Sans" font-size="12" fill="#000" font-weight="normal" textLength="39.6" lengthAdjust="spacingAndGlyphs" >Lock file</text>
<rect x="451.5" y="410.5" width="12" height="12" fill="#F4F4F4" stroke="#8E8F8F" stroke-width="1" />
<rect x="453" y="412" width="9" height="9" fill="url(#cg)" />
<text x="470.3" y="420.7" font-family="Liberation Sans" font-size="12" fill="#000" font-weight="normal" textLength="170.4" lengthAdjust="spacingAndGlyphs" >Windows Event Global\COVERAGE</text>
<rect x="451.5" y="434.5" width="12" height="12" fill="#F4F4F4" stroke="#8E8F8F" stroke-width="1" />
<rect x="453" y="436" width="9" height="9" fill="url(#cg)" />
<text x="470.3" y="445.2" font-family="Liberation Sans" font-size="12" fill="#000" font-weight="normal" textLength="154.9" lengthAdjust="spacingAndGlyphs" >Runtime Logging (for debugging)</text>
<path d="M44 635.5 L40.5 635.5 Q37.5 635.5 37.5 638.5 L37.5 714.5 Q37.5 717.5 40.5 717.5 L953.5 717.5 Q956.5 717.5 956.5 714.5 L956.5 638.5 Q956.5 635.5 953.5 635.5 L110.2 635.5" fill="none" stroke="#D5DFE5" stroke-width="1" />
<text x="47" y="640" font-family="Liberation Sans" font-size="12" fill="#000" font-weight="normal" textLength="61.2" lengthAdjust="spacingAndGlyphs" >Configuration</text>
<circle cx="59.1" cy="666" r="5.9" fill="#F2F2F2" stroke="#979797" stroke-width="1"/>
<circle cx="59.1" cy="666" r="4.4" fill="url(#rg)"/>
<text x="72.7" y="669.9" font-family="Liberation Sans" font-size="12" fill="#000" font-weight="normal" textLength="21.4" lengthAdjust="spacingAndGlyphs" >New</text>
<circle cx="59.1" cy="699.1" r="5.9" fill="#F2F2F2" stroke="#979797" stroke-width="1"/>
<circle cx="59.1" cy="699.1" r="4.4" fill="url(#rg)"/>
<circle cx="59.1" cy="699.1" r="3.4" fill="url(#rs)"/>
<text x="72.7" y="702.6" font-family="Liberation Sans" font-size="12" fill="#000" font-weight="normal" textLength="30.2" lengthAdjust="spacingAndGlyphs" >Modify</text>
<text x="161.6" y="669.9" font-family="Liberation Sans" font-size="12" fill="#000" font-weight="normal" textLength="29.6" lengthAdjust="spacingAndGlyphs" >Name:</text>
<rect x="203.5" y="654.5" width="241" height="19" fill="#F4F4F4" stroke="#C9C9C9" stroke-width="1" rx="2" />
<text x="206.5" y="668.5" font-family="Liberation Sans" font-size="12" fill="#6D6D6D" font-weight="normal" textLength="78.2" lengthAdjust="spacingAndGlyphs" >DebugCoverage</text>
<defs><linearGradient id="bg" x1="0" y1="0" x2="0" y2="1"><stop offset="0" stop-color="#F2F2F2"/><stop offset="0.5" stop-color="#EBEBEB"/><stop offset="0.5" stop-color="#DDDDDD"/><stop offset="1" stop-color="#CFCFCF"/></linearGradient></defs>
<rect x="204.5" y="688.5" width="240" height="20" fill="url(#bg)" stroke="#707070" stroke-width="1" rx="3" />
<text x="232.3" y="702.8" font-family="Liberation Sans" font-size="12" fill="#000" font-weight="normal" textLength="182.3" lengthAdjust="spacingAndGlyphs" >Disable code coverage for C# projects</text>
<rect x="452.5" y="654.5" width="251" height="20" fill="#F4F4F4" stroke="#ADB2B5" stroke-width="1" rx="3" />
<text x="510.5" y="668" font-family="Liberation Sans" font-size="12" fill="#838383" font-weight="normal" textLength="134.9" lengthAdjust="spacingAndGlyphs" >Create new C# configuration</text>
<rect x="452.5" y="688.5" width="251" height="20" fill="url(#bg)" stroke="#707070" stroke-width="1" rx="3" />
<text x="487.9" y="702.8" font-family="Liberation Sans" font-size="12" fill="#000" font-weight="normal" textLength="179.5" lengthAdjust="spacingAndGlyphs" >Enable code coverage for C# projects</text>
<rect x="912.7" y="209.4" width="49.7" height="34.7" fill="none" stroke="#000" stroke-width="2.8" rx="6" />
<rect x="30.5" y="249.2" width="75.9" height="34.3" fill="none" stroke="#000" stroke-width="2.9" rx="7" />
<rect x="164.7" y="317.7" width="69.6" height="30.4" fill="none" stroke="#000" stroke-width="3.1" rx="6" />
<path d="M462 688.3 Q448.5 688.5 448.5 700 L448.5 713 Q448.5 724.5 466 724.5 L728 724.5 Q744.5 724.5 744.5 712 L744.5 696 Q744.5 685.5 728 685.3 L600 685 Q500 687 462 688.3 Z" fill="none" stroke="#000" stroke-width="2.8" />
</svg></body></html>
